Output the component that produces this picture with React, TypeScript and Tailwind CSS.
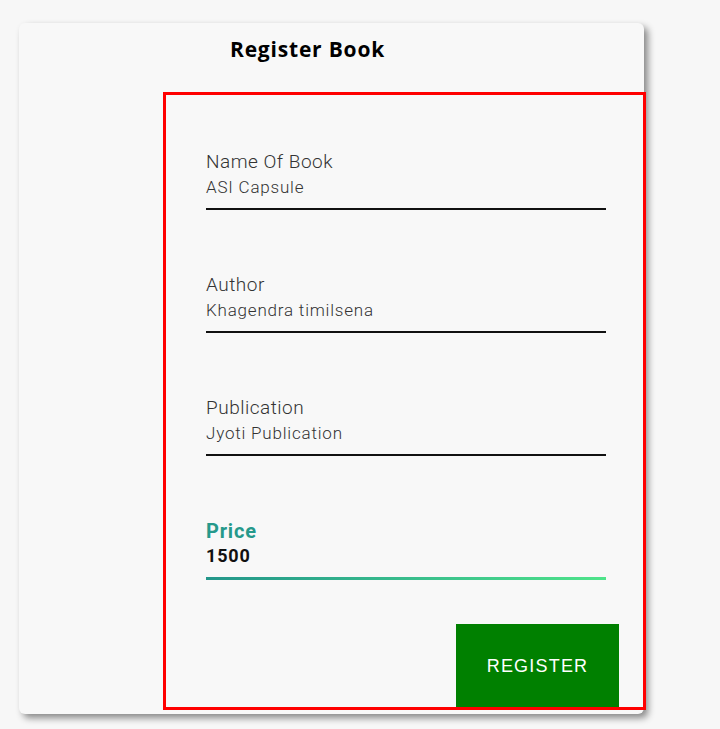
const fields = [
  { label: "Name Of Book", value: "ASI Capsule" },
  { label: "Author", value: "Khagendra timilsena" },
  { label: "Publication", value: "Jyoti Publication" },
];

function Field({ label, value }: { label: string; value: string }) {
  return (
    <div className="w-[400px] flex flex-col">
      <span className="text-[19px] leading-[24px] font-light text-[#333] tracking-[0.5px]">{label}</span>
      <span className="mt-[2px] text-[17px] leading-[22px] font-light text-[#333] tracking-[0.8px]">{value}</span>
      <div className="mt-[10px] h-[2px] bg-[#111]"></div>
    </div>
  );
}

export default function App() {
  return (
    <div className="min-h-[729px] bg-[#f7f7f7] pt-[23px] pl-[19px]" style={{ fontFamily: "Roboto, 'Liberation Sans', sans-serif" }}>
      <div className="w-[625px] h-[691px] bg-[#f8f8f8] rounded-md shadow-[4px_4px_7px_rgba(0,0,0,0.45)]">
        <h1 className="pl-[211px] pt-[12px] text-[21px] leading-[28px] font-bold text-black tracking-[0.8px]" style={{ fontFamily: "'Open Sans', Roboto, sans-serif" }}>
          Register Book
        </h1>

        <div className="ml-[147px] mt-[32px] w-[477px] h-[612px] outline-3 outline-[#f00] pl-10 pt-[55px]">
          <div className="flex flex-col gap-[63px]">
            {fields.map((f) => (
              <Field key={f.label} label={f.label} value={f.value} />
            ))}
            <div className="w-[400px] flex flex-col">
              <span className="text-[20px] leading-[24px] font-bold text-[#26998b] tracking-[0.8px]">Price</span>
              <span className="mt-[2px] text-[18px] leading-[22px] font-bold text-[#111] tracking-[0.8px]">1500</span>
              <div className="mt-[10px] h-[3px] bg-gradient-to-r from-[#23968a] to-[#4fe48a]"></div>
            </div>
          </div>

          <button className="mt-[44px] ml-[250px] w-[163px] h-[85px] bg-[#008000] text-white text-[18px] tracking-[1.2px]" style={{ fontFamily: "'Liberation Sans', Arial, sans-serif" }}>
            REGISTER
          </button>
        </div>
      </div>
    </div>
  );
}
